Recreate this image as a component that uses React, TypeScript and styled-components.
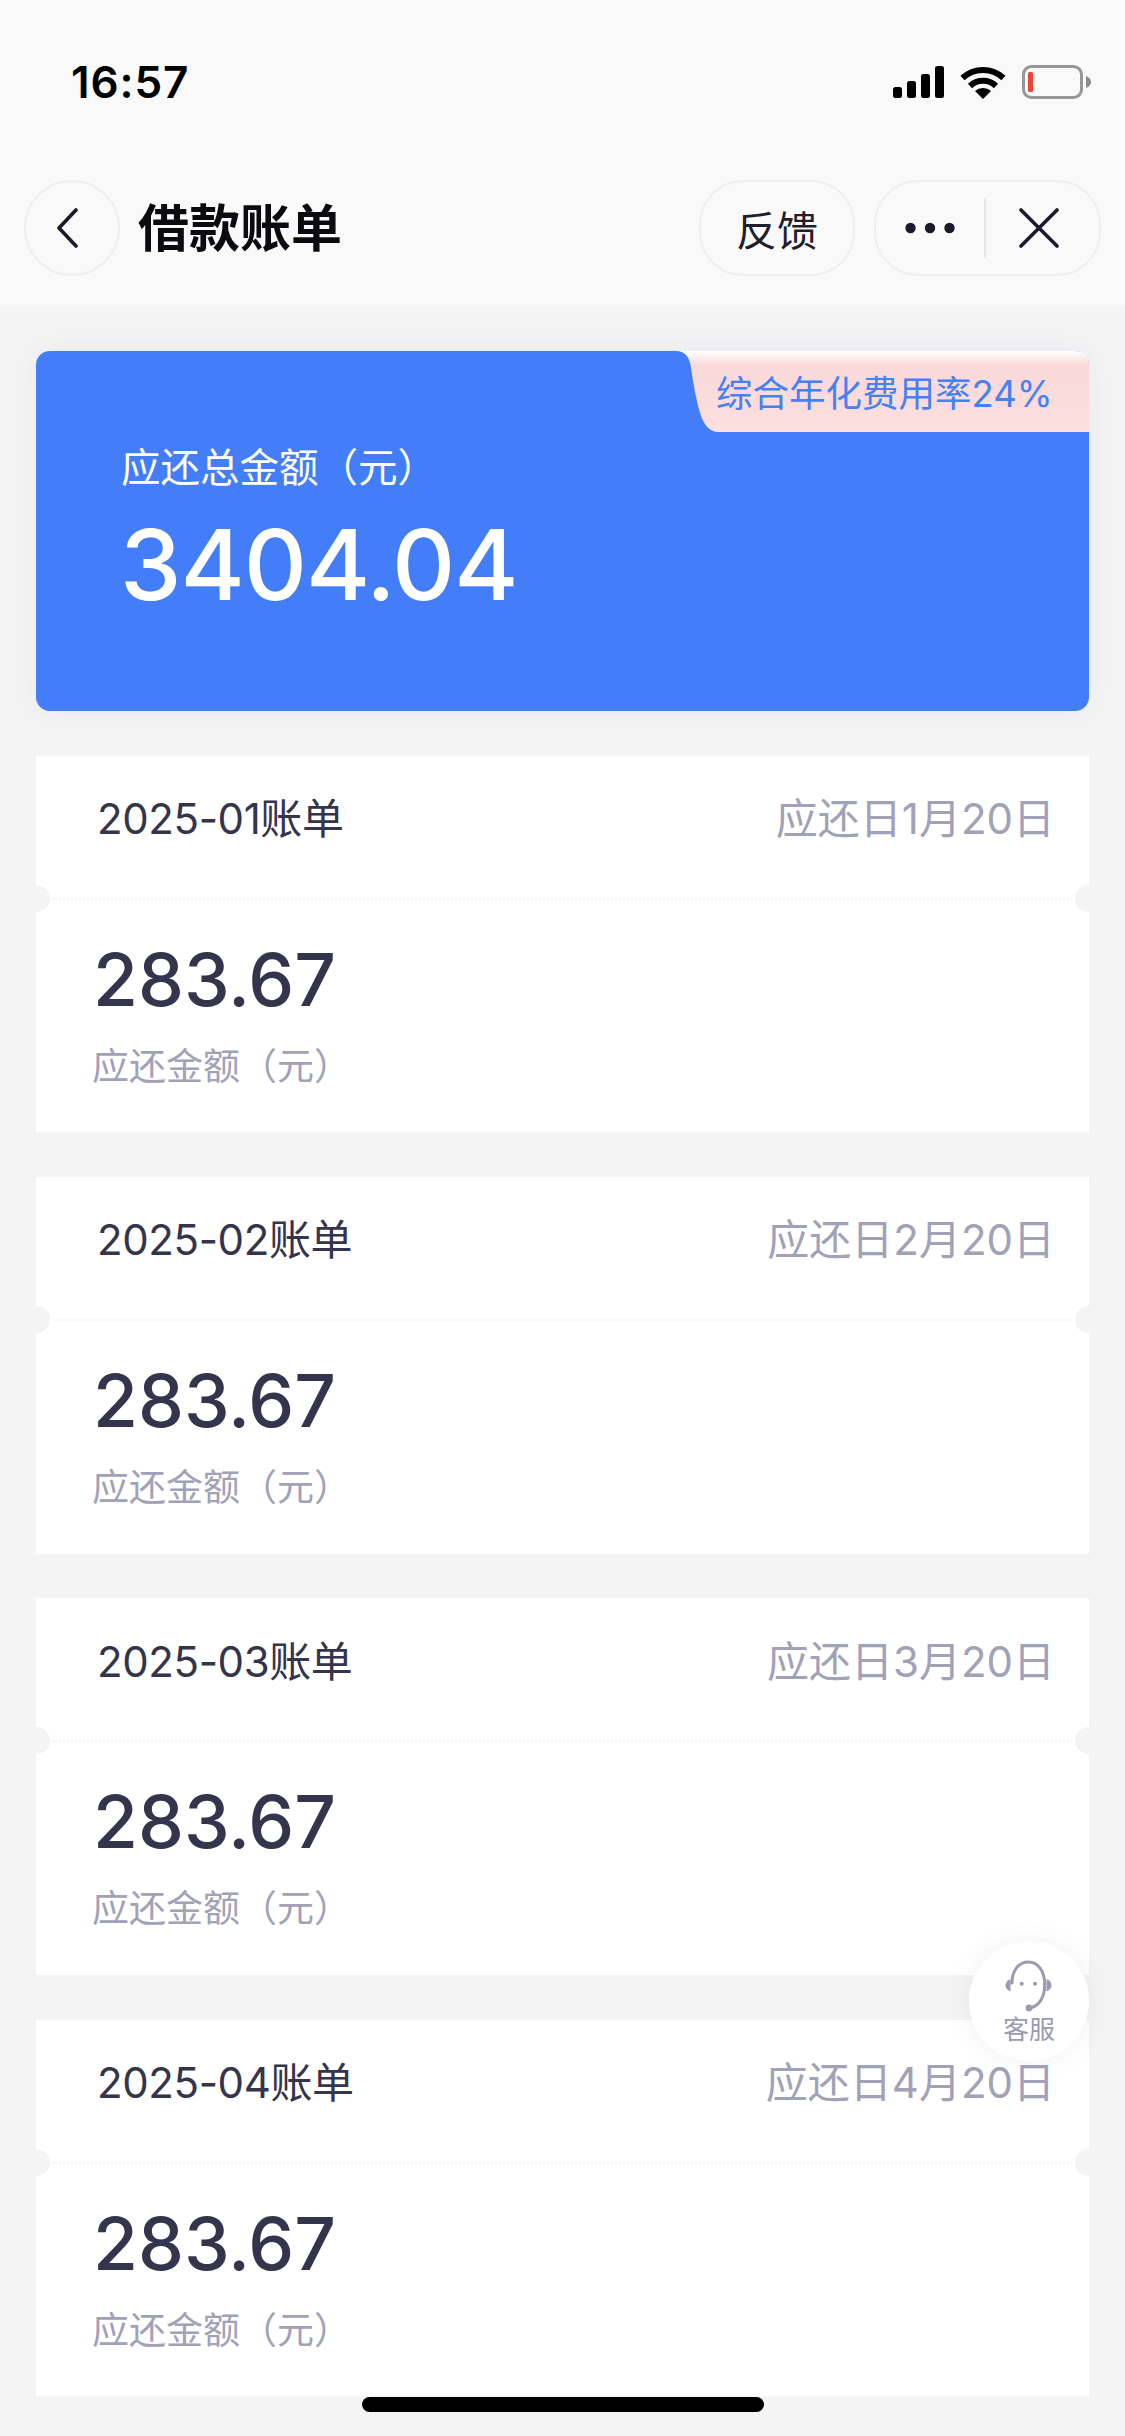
import React from "react";
import styled, { createGlobalStyle } from "styled-components";

const FONT = `Inter, "Noto Sans CJK SC", "Liberation Sans", sans-serif`;

const Global = createGlobalStyle`
  html, body { margin: 0; padding: 0; background: #f4f4f4; }
  * { box-sizing: border-box; }
`;

const Page = styled.div`
  position: relative;
  width: 1125px;
  height: 2436px;
  overflow: hidden;
  background: #f4f4f4;
  font-family: ${FONT};
`;

const Header = styled.header`
  height: 306px;
  padding-top: 60px;
  background: #f9f9f9;
`;

const StatusBar = styled.div`
  height: 44px;
  display: flex;
  align-items: center;
  justify-content: space-between;
  padding: 0 34px 0 71px;
`;

const Time = styled.span`
  font-size: 44px;
  font-weight: 600;
  line-height: 44px;
  color: #000;
  letter-spacing: 0.9px;
`;

const StatusIcons = styled.div`
  display: flex;
  align-items: center;
  gap: 16px;
`;

const Nav = styled.nav`
  height: 96px;
  margin-top: 76px;
  display: flex;
  align-items: center;
  padding: 0 24px;
`;

const CircleButton = styled.div`
  width: 96px;
  height: 96px;
  padding-right: 10px;
  border-radius: 50%;
  border: 2px solid #eeeeee;
  display: flex;
  align-items: center;
  justify-content: center;
`;

const Title = styled.h1`
  margin: 2px 0 0 18px;
  font-size: 51px;
  font-weight: 700;
  line-height: 60px;
  color: #0b0b0f;
  flex: 1;
`;

const PillButton = styled.div`
  width: 156px;
  height: 96px;
  border-radius: 44px;
  border: 2px solid #eeeeee;
  display: flex;
  align-items: center;
  justify-content: center;
  font-size: 41px;
  color: #1f1f2b;
`;

const Capsule = styled.div`
  width: 227px;
  height: 96px;
  margin-left: 19px;
  border-radius: 44px;
  border: 2px solid #eeeeee;
  display: flex;
  align-items: center;
`;

const CapsuleSide = styled.div<{ $nudge?: number }>`
  flex: 1;
  display: flex;
  align-items: center;
  justify-content: center;
  padding-right: ${(p) => p.$nudge ?? 0}px;
`;

const CapsuleDivider = styled.div`
  width: 2px;
  height: 60px;
  background: #e6e6e6;
`;

const Main = styled.main`
  padding: 45px 36px 0;
  display: flex;
  flex-direction: column;
  gap: 44.67px;
`;

const SummaryCard = styled.section`
  position: relative;
  height: 360px;
  padding: 92px 0 0 84px;
  border-radius: 14px;
  background: #437df8;
  color: #fff;
  box-shadow: 0 0 30px rgba(67, 90, 180, 0.07);
`;

const RateBadge = styled.div`
  position: absolute;
  top: 0;
  right: 0;
  width: 413px;
  height: 81px;
  padding: 0 0 0 40px;
  display: flex;
  align-items: center;
  font-size: 36.5px;
  color: #4680f5;
  white-space: nowrap;
  background: linear-gradient(180deg, #ffffff 0%, #f9d8d8 18%, #fcdfdf 100%);
  clip-path: path("M0 0 H399 Q413 0 413 14 V81 H42 Q30 81 24 62 Q19 45 15 17 Q13 0 0 0 Z");
`;

const SummaryLabel = styled.div`
  font-size: 39.5px;
  line-height: 50px;
  margin-left: 1px;
`;

const SummaryAmount = styled.div`
  margin-top: 17px;
  font-size: 98px;
  font-weight: 500;
  line-height: 110px;
  letter-spacing: -1px;
`;

const BillCard = styled.article`
  position: relative;
  height: 376.67px;
  background: #fff;
  &::before,
  &::after {
    content: "";
    position: absolute;
    top: 129px;
    width: 27px;
    height: 27px;
    border-radius: 50%;
    background: #f4f4f4;
  }
  &::before { left: -13px; }
  &::after { right: -13px; }
`;

const BillHeader = styled.div`
  height: 128px;
  display: flex;
  align-items: center;
  justify-content: space-between;
  padding: 0 34px 8px 61px;
`;

const BillTitle = styled.span`
  font-size: 42px;
  color: #34344c;
  letter-spacing: -0.4px;
`;

const DueDate = styled.span`
  font-size: 42px;
  color: #a1a1b8;
`;

const DashLine = styled.div`
  height: 2px;
  margin: 14px 16px 0;
  border-top: 2px dotted #f5f5f5;
`;

const BillBody = styled.div`
  padding: 40px 0 0 57px;
`;

const BillAmount = styled.div`
  font-size: 73px;
  font-weight: 500;
  line-height: 80px;
  color: #34344c;
`;

const BillCaption = styled.div`
  margin-top: 22px;
  margin-left: -1px;
  font-size: 37px;
  line-height: 50px;
  color: #a1a1b8;
`;

const ServiceFab = styled.div`
  position: absolute;
  left: 969px;
  top: 1941px;
  width: 120px;
  height: 120px;
  border-radius: 50%;
  background: #fff;
  box-shadow: 0 0 26px rgba(90, 90, 120, 0.08);
  display: flex;
  flex-direction: column;
  align-items: center;
  padding-top: 16px;
`;

const ServiceLabel = styled.span`
  margin-top: 2px;
  font-size: 26px;
  line-height: 30px;
  color: #9a9ab2;
`;

const HomeIndicator = styled.div`
  position: absolute;
  left: 362px;
  top: 2397px;
  width: 402px;
  height: 15px;
  border-radius: 8px;
  background: #000;
`;

const Signal = () => (
  <svg width="51" height="32" viewBox="0 0 51 32" fill="#000">
    <rect x="0" y="21" width="9" height="11" rx="2.5" />
    <rect x="14" y="15" width="9" height="17" rx="2.5" />
    <rect x="28" y="8" width="9" height="24" rx="2.5" />
    <rect x="42" y="0" width="9" height="32" rx="2.5" />
  </svg>
);

const Wifi = () => (
  <svg width="46" height="33" viewBox="0 0 46 33" fill="none" stroke="#000">
    <path d="M2.5 12 A30 30 0 0 1 43.5 12" strokeWidth="6" />
    <path d="M10 20 A19 19 0 0 1 36 20" strokeWidth="6" />
    <path d="M23 33 L15 25 A12 12 0 0 1 31 25 Z" fill="#000" stroke="none" />
  </svg>
);

const Battery = () => (
  <svg width="69" height="34" viewBox="0 0 69 34" fill="none">
    <rect x="1.5" y="1.5" width="58" height="31" rx="8" stroke="#979797" strokeWidth="3" />
    <rect x="6" y="7" width="5" height="20" rx="1.5" fill="#ee4533" />
    <path d="M64 11 Q69 13 69 17 Q69 21 64 23 Z" fill="#8a8a8a" />
  </svg>
);

const BackIcon = () => (
  <svg width="24" height="40" viewBox="0 0 24 40" fill="none">
    <path d="M21 2 L4 20 L21 38" stroke="#1a1a2a" strokeWidth="3.6" strokeLinecap="round" strokeLinejoin="round" />
  </svg>
);

const DotsIcon = () => (
  <svg width="50" height="12" viewBox="0 0 50 12" fill="#1a1a2a">
    <circle cx="5.5" cy="6" r="5.2" />
    <circle cx="25" cy="6" r="5.2" />
    <circle cx="44.5" cy="6" r="5.2" />
  </svg>
);

const CloseIcon = () => (
  <svg width="42" height="40" viewBox="0 0 42 40" fill="none">
    <path d="M3 2 L39 38 M39 2 L3 38" stroke="#1a1a2a" strokeWidth="3.6" strokeLinecap="round" />
  </svg>
);

const ServiceIcon = () => (
  <svg width="60" height="56" viewBox="0 0 60 56" fill="none">
    <path d="M13 26 C13 13 20 5 29.2 5 C38.5 5 45.7 13 45.7 28 C45.7 40 40 50 30 51" stroke="#9a9ab2" strokeWidth="3" strokeLinecap="round" />
    <path d="M11.5 22 C8 23.5 6.5 26 6.5 28.3 C6.5 31 8 33 11.5 34.5 Z" fill="#9a9ab2" />
    <path d="M47.5 22 C51 23.5 52.5 26 52.5 28.3 C52.5 31 51 33 47.5 34.5 Z" fill="#9a9ab2" />
    <circle cx="30" cy="51" r="3.4" fill="#9a9ab2" />
    <circle cx="22.7" cy="26.7" r="2" fill="#9a9ab2" />
    <circle cx="36" cy="26.7" r="2" fill="#9a9ab2" />
  </svg>
);

const bills = [
  { month: "2025-01账单", due: "应还日1月20日" },
  { month: "2025-02账单", due: "应还日2月20日" },
  { month: "2025-03账单", due: "应还日3月20日" },
  { month: "2025-04账单", due: "应还日4月20日" },
];

export default function App() {
  return (
    <Page>
      <Global />
      <Header>
        <StatusBar>
          <Time>16:57</Time>
          <StatusIcons>
            <Signal />
            <Wifi />
            <Battery />
          </StatusIcons>
        </StatusBar>
        <Nav>
          <CircleButton>
            <BackIcon />
          </CircleButton>
          <Title>借款账单</Title>
          <PillButton>反馈</PillButton>
          <Capsule>
            <CapsuleSide>
              <DotsIcon />
            </CapsuleSide>
            <CapsuleDivider />
            <CapsuleSide $nudge={6}>
              <CloseIcon />
            </CapsuleSide>
          </Capsule>
        </Nav>
      </Header>
      <Main>
        <SummaryCard>
          <RateBadge>综合年化费用率24%</RateBadge>
          <SummaryLabel>应还总金额（元）</SummaryLabel>
          <SummaryAmount>3404.04</SummaryAmount>
        </SummaryCard>
        {bills.map((bill) => (
          <BillCard key={bill.month}>
            <BillHeader>
              <BillTitle>{bill.month}</BillTitle>
              <DueDate>{bill.due}</DueDate>
            </BillHeader>
            <DashLine />
            <BillBody>
              <BillAmount>283.67</BillAmount>
              <BillCaption>应还金额（元）</BillCaption>
            </BillBody>
          </BillCard>
        ))}
      </Main>
      <ServiceFab>
        <ServiceIcon />
        <ServiceLabel>客服</ServiceLabel>
      </ServiceFab>
      <HomeIndicator />
    </Page>
  );
}
